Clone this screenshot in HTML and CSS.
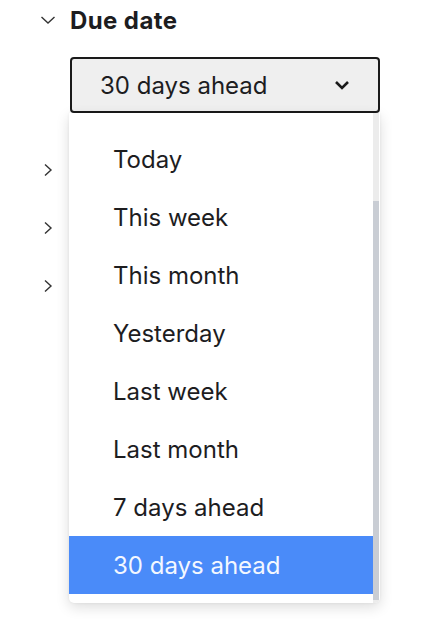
FILE: index.html
```html
<!DOCTYPE html>
<html>
<head>
<meta charset="utf-8">
<link rel="stylesheet" href="styles.css">
</head>
<body>
<div class="panel">
  <div class="section open">
    <div class="head">
      <svg class="chev-down" width="16" height="10" viewBox="0 0 16 10"><path d="M1.5 2 L8 8 L14.5 2" fill="none" stroke="#333" stroke-width="1.4"/></svg>
      <span class="title">Due date</span>
    </div>
    <div class="field">
      <div class="select">
        <span>30 days ahead</span>
        <svg class="sel-chev" width="16" height="10" viewBox="0 0 16 10"><path d="M2 2 L8 8 L14 2" fill="none" stroke="#1a1a1a" stroke-width="2.6"/></svg>
      </div>
      <div class="menu">
        <ul class="list">
          <li>Today</li>
          <li>This week</li>
          <li>This month</li>
          <li>Yesterday</li>
          <li>Last week</li>
          <li>Last month</li>
          <li>7 days ahead</li>
          <li class="active">30 days ahead</li>
        </ul>
        <div class="track"><div class="thumb"></div></div>
      </div>
    </div>
  </div>
  <div class="collapsed">
    <div class="row"><svg width="10" height="14" viewBox="0 0 10 14"><path d="M2 1.5 L8 7 L2 12.5" fill="none" stroke="#333" stroke-width="1.4"/></svg></div>
    <div class="row"><svg width="10" height="14" viewBox="0 0 10 14"><path d="M2 1.5 L8 7 L2 12.5" fill="none" stroke="#333" stroke-width="1.4"/></svg></div>
    <div class="row"><svg width="10" height="14" viewBox="0 0 10 14"><path d="M2 1.5 L8 7 L2 12.5" fill="none" stroke="#333" stroke-width="1.4"/></svg></div>
  </div>
</div>
</body>
</html>
```
FILE: styles.css
```css
html, body {
  margin: 0;
  padding: 0;
  background: #fff;
  font-family: Inter, "Noto Sans", sans-serif;
  color: #1d1d1f;
}
body {
  min-height: 640px;
}
.panel {
  padding: 0 0 0 40px;
}
.head {
  display: flex;
  align-items: center;
  height: 40px;
  gap: 14px;
}
.chev-down { display: block; }
.title {
  font-weight: 700;
  font-size: 24px;
  letter-spacing: 0.4px;
}
.field {
  position: relative;
  margin: 17px 0 0 30px;
  width: 310px;
}
.select {
  box-sizing: border-box;
  height: 56px;
  border: 2px solid #1a1a1a;
  border-radius: 4px;
  background: #efefef;
  display: flex;
  align-items: center;
  justify-content: space-between;
  padding: 0 28px 0 28px;
  font-size: 24px;
}
.sel-chev { display: block; }
.menu {
  position: absolute;
  top: 56px;
  left: -1px;
  width: 311px;
  height: 490px;
  background: #fff;
  border-radius: 0 0 5px 5px;
  box-shadow: 0 4px 14px rgba(0,0,0,0.14), 0 0 3px rgba(0,0,0,0.06);
  display: flex;
  overflow: hidden;
}
.list {
  list-style: none;
  margin: 0;
  padding: 17px 0 0 0;
  flex: 1;
}
.list li {
  height: 58px;
  display: flex;
  align-items: center;
  padding-left: 44px;
  font-size: 24px;
}
.list li.active {
  background: #4a8bf9;
  color: #f3f7ff;
}
.track {
  width: 6px;
  background: #ececec;
  display: flex;
  flex-direction: column;
  margin-right: 1px;
}
.thumb {
  margin-top: 88px;
  height: 399px;
  background: #c9cdd4;
}
.collapsed {
  padding-top: 28px;
}
.row {
  height: 58px;
  display: flex;
  align-items: center;
  padding-left: 3px;
}
.row svg { display: block; }
```
